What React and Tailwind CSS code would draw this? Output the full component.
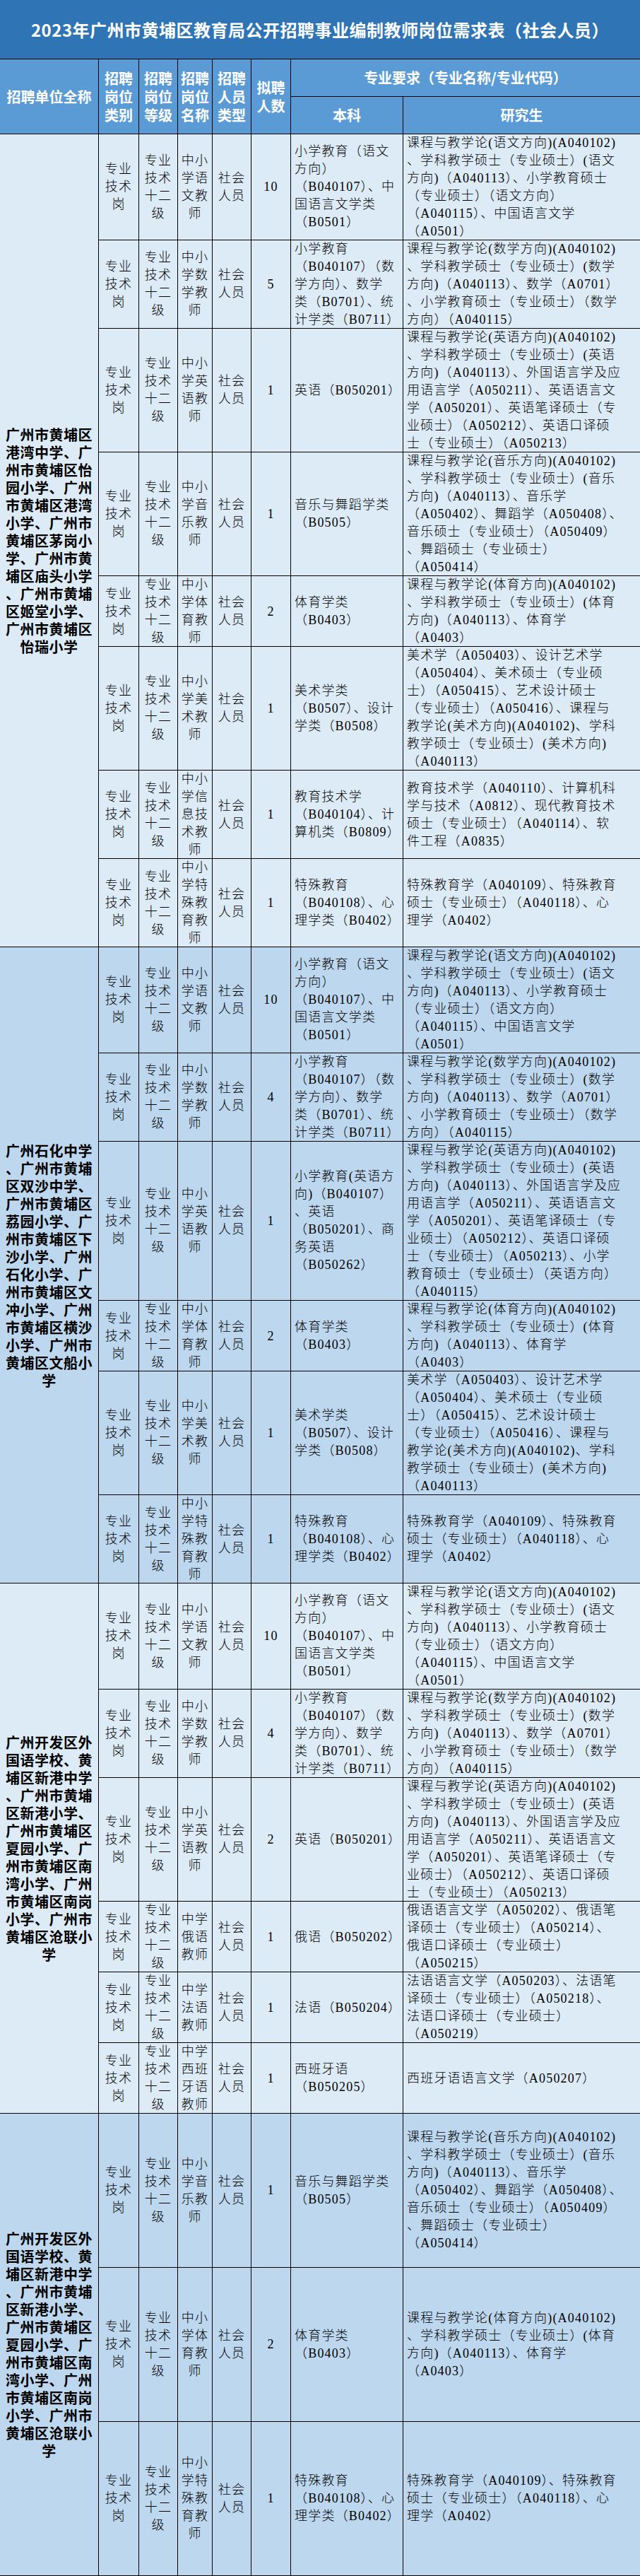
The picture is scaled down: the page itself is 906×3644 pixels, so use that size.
import React from "react";

const GW = ["专业", "技术", "岗"];
const DJ = ["专业", "技术", "十二", "级"];
const LX = ["社会", "人员"];

const S = {
  yuwen: {
    name: ["中小", "学语", "文教", "师"],
    bk: ["小学教育（语文", "方向）", "（B040107）、中", "国语言文学类", "（B0501）"],
    yjs: [
      "课程与教学论(语文方向)(A040102)",
      "、学科教学硕士（专业硕士）(语文",
      "方向)（A040113）、小学教育硕士",
      "（专业硕士）（语文方向）",
      "（A040115）、中国语言文学",
      "（A0501）",
    ],
  },
  shuxue: {
    name: ["中小", "学数", "学教", "师"],
    bk: ["小学教育", "（B040107）（数", "学方向）、数学", "类（B0701）、统", "计学类（B0711）"],
    yjs: [
      "课程与教学论(数学方向)(A040102)",
      "、学科教学硕士（专业硕士）(数学",
      "方向)（A040113）、数学（A0701）",
      "、小学教育硕士（专业硕士）（数学",
      "方向）（A040115）",
    ],
  },
  yingyu: {
    name: ["中小", "学英", "语教", "师"],
    bk: ["英语（B050201）"],
    yjs: [
      "课程与教学论(英语方向)(A040102)",
      "、学科教学硕士（专业硕士）(英语",
      "方向)（A040113）、外国语言学及应",
      "用语言学（A050211）、英语语言文",
      "学（A050201）、英语笔译硕士（专",
      "业硕士）（A050212）、英语口译硕",
      "士（专业硕士）（A050213）",
    ],
  },
  yingyu2: {
    name: ["中小", "学英", "语教", "师"],
    bk: ["小学教育(英语方", "向)（B040107）", "、英语", "（B050201）、商", "务英语", "（B050262）"],
    yjs: [
      "课程与教学论(英语方向)(A040102)",
      "、学科教学硕士（专业硕士）(英语",
      "方向)（A040113）、外国语言学及应",
      "用语言学（A050211）、英语语言文",
      "学（A050201）、英语笔译硕士（专",
      "业硕士）（A050212）、英语口译硕",
      "士（专业硕士）（A050213）、小学",
      "教育硕士（专业硕士）（英语方向）",
      "（A040115）",
    ],
  },
  yinyue: {
    name: ["中小", "学音", "乐教", "师"],
    bk: ["音乐与舞蹈学类", "（B0505）"],
    yjs: [
      "课程与教学论(音乐方向)(A040102)",
      "、学科教学硕士（专业硕士）(音乐",
      "方向)（A040113）、音乐学",
      "（A050402）、舞蹈学（A050408）、",
      "音乐硕士（专业硕士）（A050409）",
      "、舞蹈硕士（专业硕士）",
      "（A050414）",
    ],
  },
  tiyu: {
    name: ["中小", "学体", "育教", "师"],
    bk: ["体育学类", "（B0403）"],
    yjs: [
      "课程与教学论(体育方向)(A040102)",
      "、学科教学硕士（专业硕士）(体育",
      "方向)（A040113）、体育学",
      "（A0403）",
    ],
  },
  meishu: {
    name: ["中小", "学美", "术教", "师"],
    bk: ["美术学类", "（B0507）、设计", "学类（B0508）"],
    yjs: [
      "美术学（A050403）、设计艺术学",
      "（A050404）、美术硕士（专业硕",
      "士）（A050415）、艺术设计硕士",
      "（专业硕士）（A050416）、课程与",
      "教学论(美术方向)(A040102)、学科",
      "教学硕士（专业硕士）(美术方向)",
      "（A040113）",
    ],
  },
  xinxi: {
    name: ["中小", "学信", "息技", "术教", "师"],
    bk: ["教育技术学", "（B040104）、计", "算机类（B0809）"],
    yjs: [
      "教育技术学（A040110）、计算机科",
      "学与技术（A0812）、现代教育技术",
      "硕士（专业硕士）（A040114）、软",
      "件工程（A0835）",
    ],
  },
  teshu: {
    name: ["中小", "学特", "殊教", "育教", "师"],
    bk: ["特殊教育", "（B040108）、心", "理学类（B0402）"],
    yjs: [
      "特殊教育学（A040109）、特殊教育",
      "硕士（专业硕士）（A040118）、心",
      "理学（A0402）",
    ],
  },
  eyu: {
    name: ["中学", "俄语", "教师"],
    bk: ["俄语（B050202）"],
    yjs: [
      "俄语语言文学（A050202）、俄语笔",
      "译硕士（专业硕士）（A050214）、",
      "俄语口译硕士（专业硕士）",
      "（A050215）",
    ],
  },
  fayu: {
    name: ["中学", "法语", "教师"],
    bk: ["法语（B050204）"],
    yjs: [
      "法语语言文学（A050203）、法语笔",
      "译硕士（专业硕士）（A050218）、",
      "法语口译硕士（专业硕士）",
      "（A050219）",
    ],
  },
  xibanya: {
    name: ["中学", "西班", "牙语", "教师"],
    bk: ["西班牙语", "（B050205）"],
    yjs: ["西班牙语语言文学（A050207）"],
  },
};

const H = {
  100: "h-[100px]",
  125: "h-[125px]",
  150: "h-[150px]",
  175: "h-[175px]",
  218: "h-[218px]",
  225: "h-[225px]",
};

const SECTIONS = [
  {
    bg: "bg-[#ddebf7]",
    unit: [
      "广州市黄埔区",
      "港湾中学、广",
      "州市黄埔区怡",
      "园小学、广州",
      "市黄埔区港湾",
      "小学、广州市",
      "黄埔区茅岗小",
      "学、广州市黄",
      "埔区庙头小学",
      "、广州市黄埔",
      "区姬堂小学、",
      "广州市黄埔区",
      "怡瑞小学",
    ],
    rows: [
      ["yuwen", "10", 150],
      ["shuxue", "5", 125],
      ["yingyu", "1", 175],
      ["yinyue", "1", 175],
      ["tiyu", "2", 100],
      ["meishu", "1", 175],
      ["xinxi", "1", 125],
      ["teshu", "1", 125],
    ],
  },
  {
    bg: "bg-[#bdd7ee]",
    unit: [
      "广州石化中学",
      "、广州市黄埔",
      "区双沙中学、",
      "广州市黄埔区",
      "荔园小学、广",
      "州市黄埔区下",
      "沙小学、广州",
      "石化小学、广",
      "州市黄埔区文",
      "冲小学、广州",
      "市黄埔区横沙",
      "小学、广州市",
      "黄埔区文船小",
      "学",
    ],
    rows: [
      ["yuwen", "10", 150],
      ["shuxue", "4", 125],
      ["yingyu2", "1", 225],
      ["tiyu", "2", 100],
      ["meishu", "1", 175],
      ["teshu", "1", 125],
    ],
  },
  {
    bg: "bg-[#ddebf7]",
    unit: [
      "广州开发区外",
      "国语学校、黄",
      "埔区新港中学",
      "、广州市黄埔",
      "区新港小学、",
      "广州市黄埔区",
      "夏园小学、广",
      "州市黄埔区南",
      "湾小学、广州",
      "市黄埔区南岗",
      "小学、广州市",
      "黄埔区沧联小",
      "学",
    ],
    rows: [
      ["yuwen", "10", 150],
      ["shuxue", "4", 125],
      ["yingyu", "2", 175],
      ["eyu", "1", 100],
      ["fayu", "1", 100],
      ["xibanya", "1", 100],
    ],
  },
  {
    bg: "bg-[#bdd7ee]",
    unit: [
      "广州开发区外",
      "国语学校、黄",
      "埔区新港中学",
      "、广州市黄埔",
      "区新港小学、",
      "广州市黄埔区",
      "夏园小学、广",
      "州市黄埔区南",
      "湾小学、广州",
      "市黄埔区南岗",
      "小学、广州市",
      "黄埔区沧联小",
      "学",
    ],
    rows: [
      ["yinyue", "1", 218],
      ["tiyu", "2", 218],
      ["teshu", "1", 218],
    ],
  },
];

function Lines({ lines }) {
  return lines.map((l, i) => (
    <div key={i} className="whitespace-nowrap">
      {l}
    </div>
  ));
}

const center =
  "flex flex-col items-center justify-center border-r border-black text-center";
const left =
  "flex flex-col justify-center items-start pl-[5px] border-r border-black overflow-hidden";

function Row({ k, n, h }) {
  const d = S[k];
  return (
    <div
      className={`grid grid-cols-[57px_55px_49px_55px_56px_159px_335px] border-b border-black ${H[h]}`}
    >
      <div className={center}>
        <Lines lines={GW} />
      </div>
      <div className={center}>
        <Lines lines={DJ} />
      </div>
      <div className={center}>
        <Lines lines={d.name} />
      </div>
      <div className={center}>
        <Lines lines={LX} />
      </div>
      <div className={center}>
        <div>{n}</div>
      </div>
      <div className={left}>
        <Lines lines={d.bk} />
      </div>
      <div className="flex flex-col justify-center items-start pl-[5px] overflow-hidden">
        <Lines lines={d.yjs} />
      </div>
    </div>
  );
}

function Section({ s }) {
  return (
    <div className={`flex ${s.bg}`}>
      <div className="w-[140px] shrink-0 border-r border-b border-black flex flex-col items-center justify-center text-center font-['Noto_Sans_CJK_SC',sans-serif] font-bold text-[20px] tracking-[0.5px] leading-[25px] text-black">
        <Lines lines={s.unit} />
      </div>
      <div className="flex-1 flex flex-col min-w-0">
        {s.rows.map(([k, n, h], i) => (
          <Row key={i} k={k} n={n} h={h} />
        ))}
      </div>
    </div>
  );
}

function HeadCell({ w, lines }) {
  return (
    <div
      className={`${w} shrink-0 border-r border-black flex flex-col items-center justify-center text-center`}
    >
      <Lines lines={lines} />
    </div>
  );
}

export default function App() {
  return (
    <div className="w-[906px] overflow-hidden bg-white">
      <div className="h-[84px] bg-[#2f75b5] border-b border-black flex items-center justify-center text-white font-['Noto_Sans_CJK_SC',sans-serif] font-bold text-[24px] tracking-[0.5px] whitespace-nowrap">
        2023年广州市黄埔区教育局公开招聘事业编制教师岗位需求表（社会人员）
      </div>
      <div className="h-[106px] flex bg-[#5b9bd5] border-b border-black text-white font-['Noto_Sans_CJK_SC',sans-serif] font-bold text-[20px] leading-[26px]">
        <HeadCell w="w-[140px]" lines={["招聘单位全称"]} />
        <HeadCell w="w-[57px]" lines={["招聘", "岗位", "类别"]} />
        <HeadCell w="w-[55px]" lines={["招聘", "岗位", "等级"]} />
        <HeadCell w="w-[49px]" lines={["招聘", "岗位", "名称"]} />
        <HeadCell w="w-[55px]" lines={["招聘", "人员", "类型"]} />
        <HeadCell w="w-[56px]" lines={["拟聘", "人数"]} />
        <div className="flex-1 flex flex-col">
          <div className="h-[53px] border-b border-black flex items-center justify-center whitespace-nowrap">
            专业要求（专业名称/专业代码）
          </div>
          <div className="flex-1 flex">
            <div className="w-[159px] border-r border-black flex items-center justify-center">
              本科
            </div>
            <div className="flex-1 flex items-center justify-center">研究生</div>
          </div>
        </div>
      </div>
      <div className="font-['Liberation_Serif','Noto_Sans_CJK_SC',serif] font-light text-[18px] tracking-[1.2px] leading-[25px] text-black">
        {SECTIONS.map((s, i) => (
          <Section key={i} s={s} />
        ))}
      </div>
    </div>
  );
}
